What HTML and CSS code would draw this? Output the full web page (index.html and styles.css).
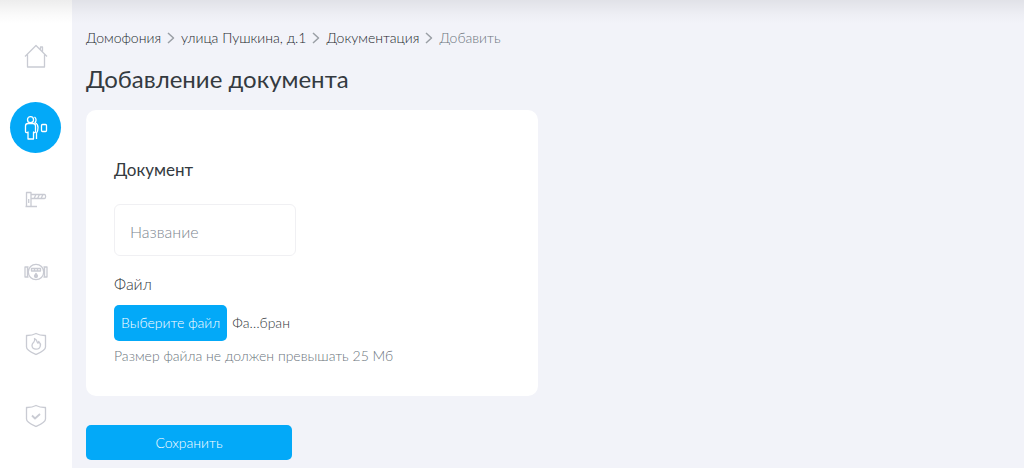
FILE: index.html
```
<!DOCTYPE html>
<html lang="ru">
<head>
    <meta charset="UTF-8">
    <meta name="viewport" content="width=device-width, initial-scale=1.0">
    <title>Добавление документа</title>
    <link rel="stylesheet" href="styles.css">
</head>
<body>

    <!-- Sidebar -->
    <nav class="sidebar" aria-label="Разделы">
        <a href="#" class="sidebar-link" aria-label="Главная">
            <svg width="24" height="24" viewBox="0 0 24 24">
                <path d="M1 12.500 12 1.500l11 11M3.500 10.500V23h17V10.500M16.500 5.500V3h2v4.500"/>
            </svg>
        </a>
        <a href="#" class="sidebar-link active" aria-label="Домофония">
            <svg width="24" height="24" viewBox="0 0 24 24">
                <circle cx="6.500" cy="3.700" r="3"/>
                <path d="M4 7.500h5c1.600 0 2.500 1 2.500 2.500v5.500c0 1.300-1.500 1.500-2 .5v7H4v-7c-.5 1-2.500.8-2.500-.5V10c0-1.500.9-2.500 2.500-2.500z"/>
                <path d="M10.500 1c2 1.500 2 4 .5 5.500 2.300 1 3 2.500 3 5s-.5 4.500-1.500 5.500V23"/>
                <rect x="17.500" y="8.500" width="5" height="7" rx="1"/>
            </svg>
        </a>
        <a href="#" class="sidebar-link" aria-label="Шлагбаумы">
            <svg width="24" height="24" viewBox="0 0 24 24">
                <path d="M2.500 18.500v-14h4.500v14zM1.500 18.500H13M4.700 11v4"/>
                <path d="M7 6.500h13.500c1.500 0 1.500 4 0 4H7M10 10.500l2-4M13.500 10.500l2-4M17 10.500l2-4"/>
            </svg>
        </a>
        <a href="#" class="sidebar-link" aria-label="Счётчики">
            <svg width="24" height="24" viewBox="0 0 24 24">
                <circle cx="12" cy="12" r="7.700"/>
                <path d="M4.500 7H1v10h3.500M3.500 7v10M19.500 7H23v10h-3.500M20.500 7v10"/>
                <path d="M7.500 8.500h9v2.500h-9zM10.500 8.500V11M13.500 8.500V11"/>
                <path class="filled" d="M12 13.500c1 1.200 1.500 1.700 1.500 2.500a1.500 1.500 0 0 1-3 0c0-.8.500-1.300 1.500-2.500z"/>
            </svg>
        </a>
        <a href="#" class="sidebar-link" aria-label="Пожарная безопасность">
            <svg width="24" height="24" viewBox="0 0 24 24">
                <path d="M12 1.500c3 1.600 6 2.100 9.500 2v11.500c0 3.500-5 5.500-9.500 7.500-4.500-2-9.500-4-9.500-7.500V3.500c3.500.1 6.500-.4 9.500-2z"/>
                <path d="M10.500 6.500c3 1.500 2 3.500 3.500 4.700.5-.4.700-.9.700-1.700 1.600 1.500 2 3.200 1.600 4.600-.5 1.900-2 3.100-4.300 3.100s-4-1.400-4-3.600c0-2 1.200-2.800 2-3.800.8-1 .9-2 .5-3.300z"/>
            </svg>
        </a>
        <a href="#" class="sidebar-link" aria-label="Охрана">
            <svg width="24" height="24" viewBox="0 0 24 24">
                <path d="M12 1.500c3 1.600 6 2.100 9.500 2v11.500c0 3.500-5 5.500-9.500 7.500-4.500-2-9.500-4-9.500-7.500V3.500c3.500.1 6.500-.4 9.500-2z"/>
                <path class="bold" d="m8 11.500 3 3 5-4.500"/>
            </svg>
        </a>
    </nav>

    <!-- Main Content -->
    <main class="content">
        <nav class="breadcrumbs" aria-label="Навигация">
            <a href="#">Домофония</a>
            <svg width="8" height="12" viewBox="0 0 8 12"><path d="m1 1 5.500 5L1 11"/></svg>
            <a href="#">улица Пушкина, д.1</a>
            <svg width="8" height="12" viewBox="0 0 8 12"><path d="m1 1 5.500 5L1 11"/></svg>
            <a href="#">Документация</a>
            <svg width="8" height="12" viewBox="0 0 8 12"><path d="m1 1 5.500 5L1 11"/></svg>
            <span class="current">Добавить</span>
        </nav>

        <h1>Добавление документа</h1>

        <form class="document-form">
            <section class="card">
                <h2>Документ</h2>
                <input type="text" class="text-input" placeholder="Название" aria-label="Название">

                <label class="field-label" for="documentFile">Файл</label>
                <div class="file-row">
                    <input type="file" id="documentFile" class="file-input">
                    <label class="button file-button" for="documentFile">Выберите файл</label>
                    <span class="file-name">Фа…бран</span>
                </div>
                <p class="hint">Размер файла не должен превышать 25 Мб</p>
            </section>

            <button type="submit" class="button save-button">Сохранить</button>
        </form>
    </main>

</body>
</html>
```
FILE: styles.css
```
* {
    box-sizing: border-box;
}

body {
    font-family: Lato, "Open Sans", sans-serif;
    font-size: 14px;
    font-weight: 300;
    line-height: 20px;
    color: #343a40;
    margin: 0;
    min-height: 100vh;
    background-color: #f2f3f9;
    display: flex;
}

/* Shadow of the page header */
body::before {
    content: "";
    position: absolute;
    top: 0;
    left: 0;
    right: 0;
    height: 24px;
    background: linear-gradient(rgba(0, 0, 0, 0.07), rgba(0, 0, 0, 0.02) 60%, rgba(0, 0, 0, 0));
    pointer-events: none;
}

.sidebar {
    flex: 0 0 72px;
    display: flex;
    flex-direction: column;
    align-items: center;
    gap: 21px;
    padding: 30px 1px 0 0;
    background-color: #fff;
}

.sidebar-link {
    width: 51px;
    height: 51px;
    display: flex;
    align-items: center;
    justify-content: center;
    border-radius: 50%;
    color: #c9cbd3;
}

.sidebar-link.active {
    background-color: #03a9f8;
    color: #fff;
}

svg {
    fill: none;
    stroke: currentColor;
    stroke-width: 1.3;
    stroke-linejoin: round;
}

svg .filled {
    fill: currentColor;
}

svg .bold {
    stroke-width: 1.8;
}

.content {
    flex: 1;
    padding: 28px 14px 8px;
}

.breadcrumbs {
    display: flex;
    align-items: center;
    gap: 6px;
}

.breadcrumbs a {
    color: #23282d;
    text-decoration: none;
}

.breadcrumbs svg {
    color: #9a9fa5;
    stroke-width: 1.5;
}

.breadcrumbs .current {
    color: #6c757d;
}

h1 {
    margin: 15px 0;
    font-size: 24px;
    font-weight: 400;
    line-height: 32px;
}

.document-form {
    display: grid;
    grid-template-columns: 1fr 1fr;
    gap: 29px 20px;
}

.card {
    grid-column: 1;
    padding: 48px 28px 30px;
    border-radius: 10px;
    background-color: #fff;
}

h2 {
    margin: 0 0 22px;
    font-size: 17px;
    font-weight: 400;
    line-height: 24px;
}

.text-input {
    display: block;
    width: 46%;
    height: 52px;
    padding: 2px 15px 0;
    border: 1px solid #f0f0f3;
    border-radius: 6px;
    background-color: #fff;
    font: inherit;
    font-size: 16px;
    color: #343a40;
}

.text-input::placeholder {
    color: #7d8690;
}

.field-label {
    display: block;
    margin: 18px 0 11px;
    font-size: 16px;
}

.file-row {
    display: flex;
    align-items: center;
    gap: 5px;
}

.file-input {
    position: absolute;
    width: 1px;
    height: 1px;
    opacity: 0;
}

.button {
    border: 0;
    border-radius: 5px;
    background-color: #03a9f8;
    color: #fff;
    font: inherit;
    text-align: center;
    cursor: pointer;
}

.file-button {
    padding: 8px 7px;
}

.hint {
    margin: 5px 0 0;
    color: #6c757d;
}

.save-button {
    grid-column: 1;
    width: 206px;
    height: 35px;
}
```
